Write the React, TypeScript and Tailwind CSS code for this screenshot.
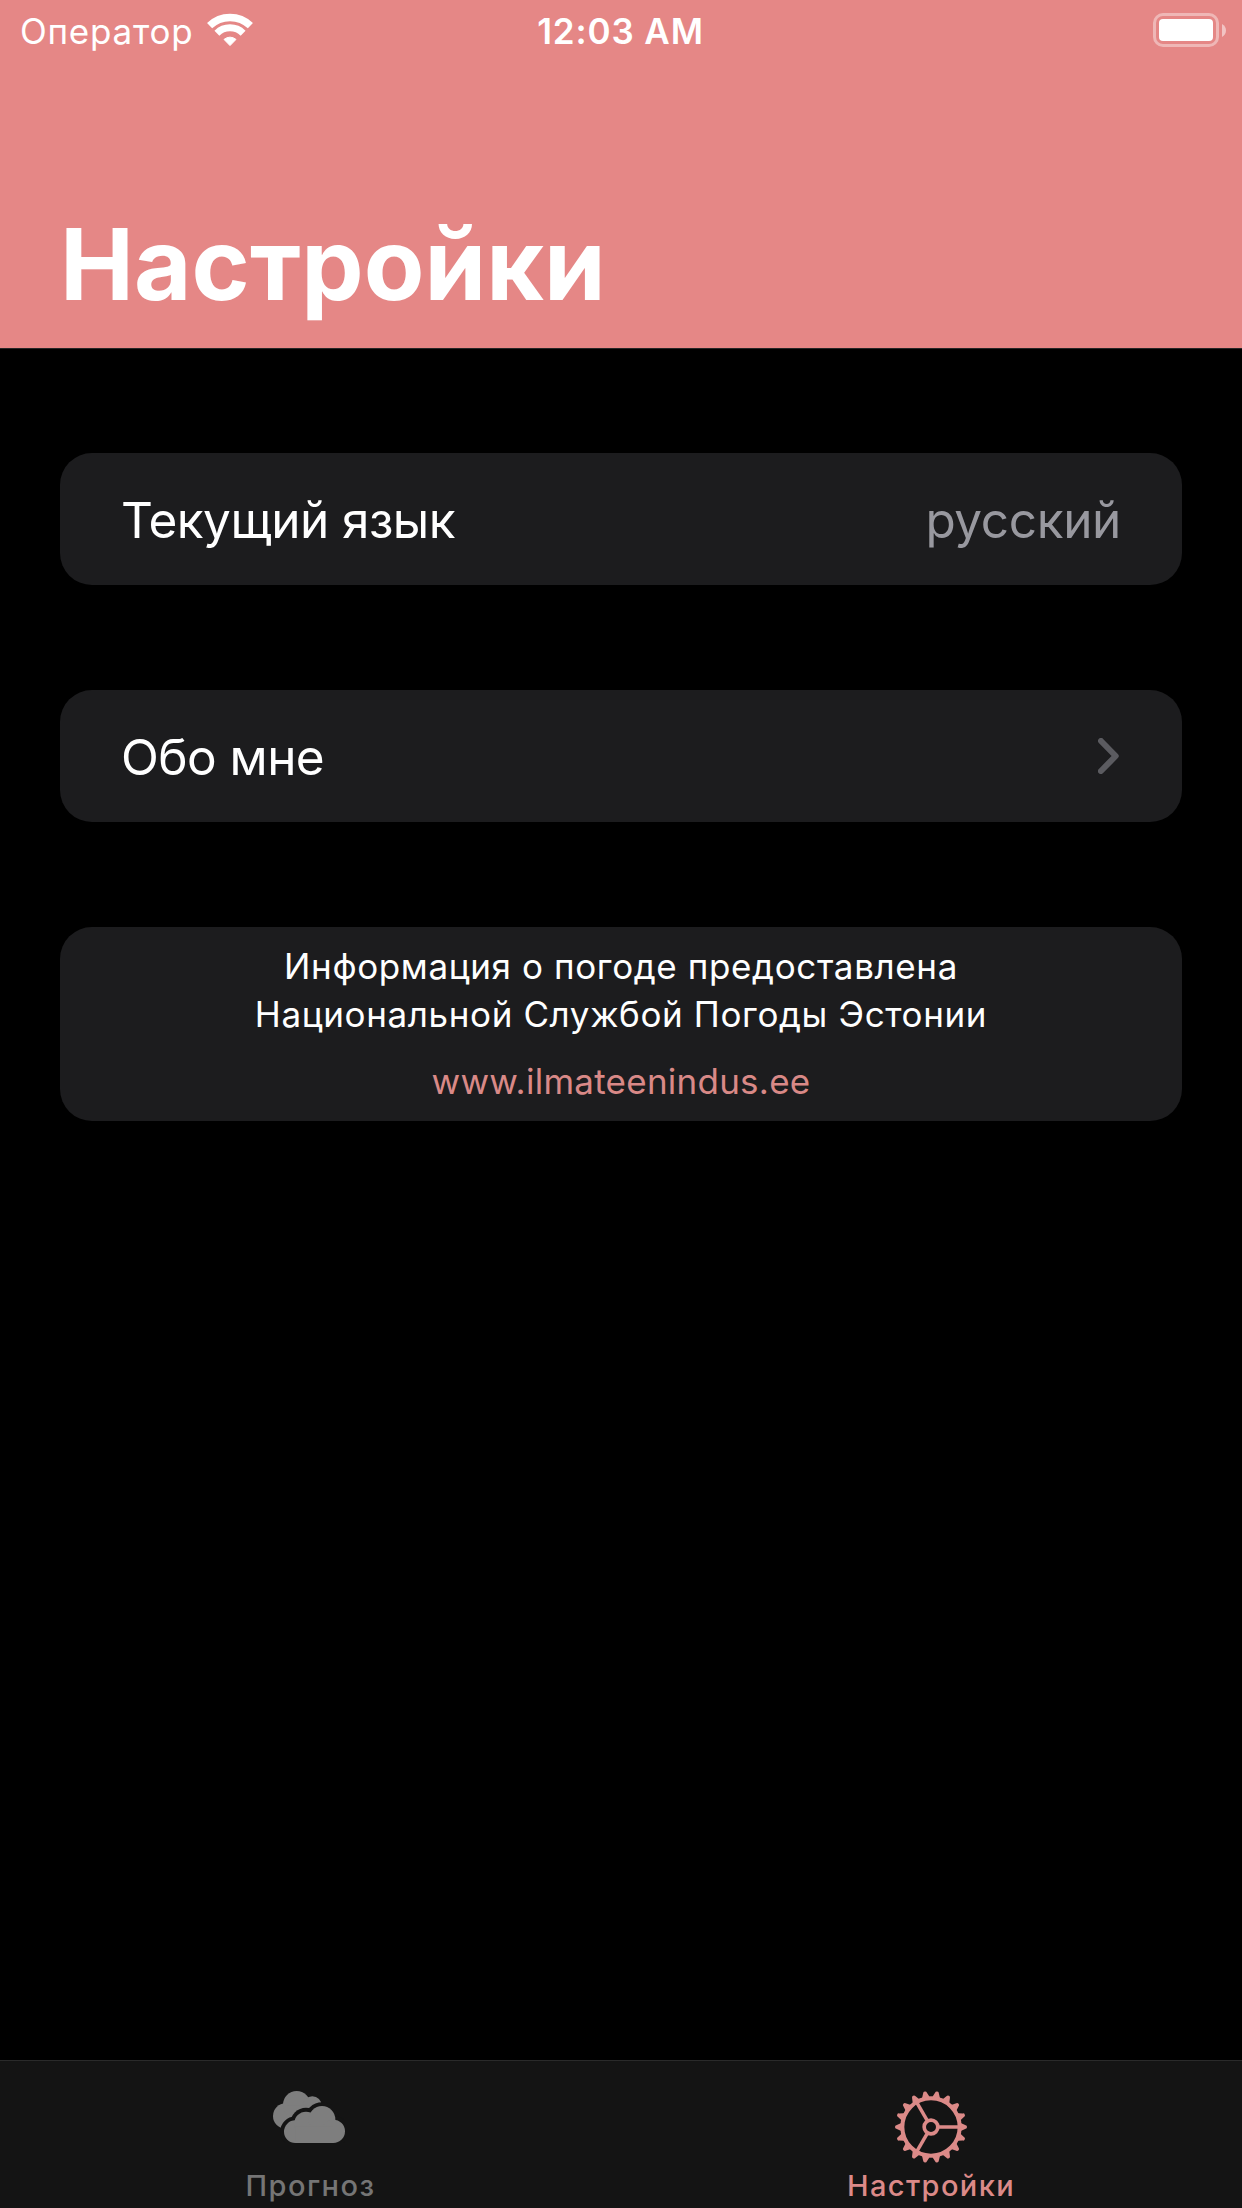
import type { ReactNode } from 'react';

function WifiIcon() {
  return (
    <svg className="block h-[34px] w-[46px]" viewBox="0 0 46 34" fill="none">
      <path d="M2.6 12.7A29.4 29.4 0 0 1 43.4 12.7" stroke="white" strokeWidth="7.4" />
      <path d="M9.9 20.2A18.7 18.7 0 0 1 36.1 20.2" stroke="white" strokeWidth="7" />
      <path
        d="M17 26.4A10 10 0 0 1 29 26.4L23 32.6Z"
        fill="white"
        stroke="white"
        strokeWidth="1"
        strokeLinejoin="round"
      />
    </svg>
  );
}

function BatteryIcon() {
  return (
    <div className="flex items-center gap-[3px]">
      <div className="h-[34px] w-[66px] rounded-[10px] border-[3px] border-white/40 p-[3px]">
        <div className="h-full w-full rounded-[4px] bg-white" />
      </div>
      <svg className="block h-[13px] w-[4px]" viewBox="0 0 4 13">
        <path d="M0 0C2.6 1.3 4 3.8 4 6.5S2.6 11.7 0 13Z" fill="white" fillOpacity="0.5" />
      </svg>
    </div>
  );
}

function ChevronIcon() {
  return (
    <svg className="block h-[36px] w-[21px]" viewBox="0 0 21 36" fill="none">
      <path
        d="M3 3L17.7 18L3 33"
        stroke="#5b5b60"
        strokeWidth="6"
        strokeLinecap="round"
        strokeLinejoin="round"
      />
    </svg>
  );
}

const frontCloud = [
  { cx: 196, cy: 244, r: 34 },
  { cx: 228, cy: 219, r: 35 },
  { cx: 276, cy: 207, r: 40 },
  { cx: 310, cy: 243, r: 35 },
];

function CloudsIcon() {
  return (
    <svg className="block h-[52px] w-[72px]" viewBox="129 122 216 156">
      <g fill="#7e7e7e">
        <circle cx="167" cy="197" r="38" />
        <circle cx="200" cy="163" r="41" />
        <circle cx="247" cy="166" r="28" />
        <rect x="170" y="165" width="70" height="40" />
      </g>
      <g fill="#141414">
        {frontCloud.map((c) => (
          <circle key={c.cx} cx={c.cx} cy={c.cy} r={c.r + 11.5} />
        ))}
      </g>
      <g fill="#7e7e7e">
        {frontCloud.map((c) => (
          <circle key={c.cx} cx={c.cx} cy={c.cy} r={c.r} />
        ))}
        <rect x="196" y="228" width="114" height="50" />
      </g>
    </svg>
  );
}

const teeth = Array.from({ length: 18 }, (_, i) => i * 20);
const spokes = [0, 120, 240];

function GearIcon() {
  return (
    <svg className="block h-[72px] w-[72px]" viewBox="-108 -108 216 216" fill="none">
      <g fill="#dc8a88">
        {teeth.map((angle) => (
          <path
            key={angle}
            d="M84 -14L91 -11L104 -5.5Q108 -5 108 0Q108 5 104 5.5L91 11L84 14Z"
            transform={`rotate(${angle})`}
          />
        ))}
      </g>
      <g stroke="#dc8a88">
        <circle r="86" strokeWidth="12" />
        <circle r="20.5" strokeWidth="11" />
        {spokes.map((angle) => (
          <path key={angle} d="M24 0H84" strokeWidth="10.5" transform={`rotate(${angle})`} />
        ))}
      </g>
    </svg>
  );
}

function Row({ label, children }: { label: ReactNode; children: ReactNode }) {
  return (
    <div className="flex h-[132px] items-center justify-between rounded-[32px] bg-[#1c1c1e] pr-[61px] pl-[61px] text-[49.5px] leading-[60px]">
      <span className="pt-[2px] tracking-[-0.55px] text-white">{label}</span>
      {children}
    </div>
  );
}

export default function App() {
  return (
    <div className="flex h-[2208px] w-[1242px] flex-col bg-black font-[Inter,sans-serif] whitespace-nowrap">
      <header className="flex h-[349px] flex-col border-b border-[#262626] bg-[#e58786] text-white">
        <div className="grid h-[60px] grid-cols-[1fr_auto_1fr] items-center pr-[16px] pl-[20px] text-[35px] leading-[42px]">
          <div className="flex items-center gap-[14px]">
            <span className="pt-[2px] tracking-[0.76px]">Оператор</span>
            <WifiIcon />
          </div>
          <span className="pt-[2px] pr-[5px] font-[560] tracking-[0.88px]">12:03 AM</span>
          <div className="flex justify-end">
            <BatteryIcon />
          </div>
        </div>
        <h1 className="mt-[144px] pl-[60px] text-[99px] leading-[120px] font-bold tracking-[0.07px]">
          Настройки
        </h1>
      </header>

      <main className="flex flex-1 flex-col gap-[105px] px-[60px] pt-[104px]">
        <Row label="Текущий язык">
          <span className="pt-[2px] tracking-[-0.36px] text-[#98989f]">русский</span>
        </Row>
        <Row label="Обо мне">
          <div className="pr-[2px]">
            <ChevronIcon />
          </div>
        </Row>
        <section className="h-[194px] rounded-[32px] bg-[#1c1c1e] pt-[15px] text-center text-[35px] leading-[48px]">
          <p className="tracking-[0.62px] text-white">
            Информация о погоде предоставлена
            <br />
            Национальной Службой Погоды Эстонии
          </p>
          <p className="mt-[19px] tracking-[0.25px] text-[#d98987]">www.ilmateenindus.ee</p>
        </section>
      </main>

      <nav className="grid h-[148px] grid-cols-2 border-t border-[#2a2a2a] bg-[#141414] text-[29px] leading-[35px] font-[450]">
        <div className="flex flex-col items-center pt-[30px]">
          <div className="h-[77px] pr-[3px]">
            <CloudsIcon />
          </div>
          <span className="tracking-[1.5px] text-[#757575]">Прогноз</span>
        </div>
        <div className="flex flex-col items-center pt-[30px]">
          <div className="h-[77px] pr-[1px]">
            <GearIcon />
          </div>
          <span className="pr-[1px] tracking-[1.4px] text-[#dc8a88]">Настройки</span>
        </div>
      </nav>
    </div>
  );
}
